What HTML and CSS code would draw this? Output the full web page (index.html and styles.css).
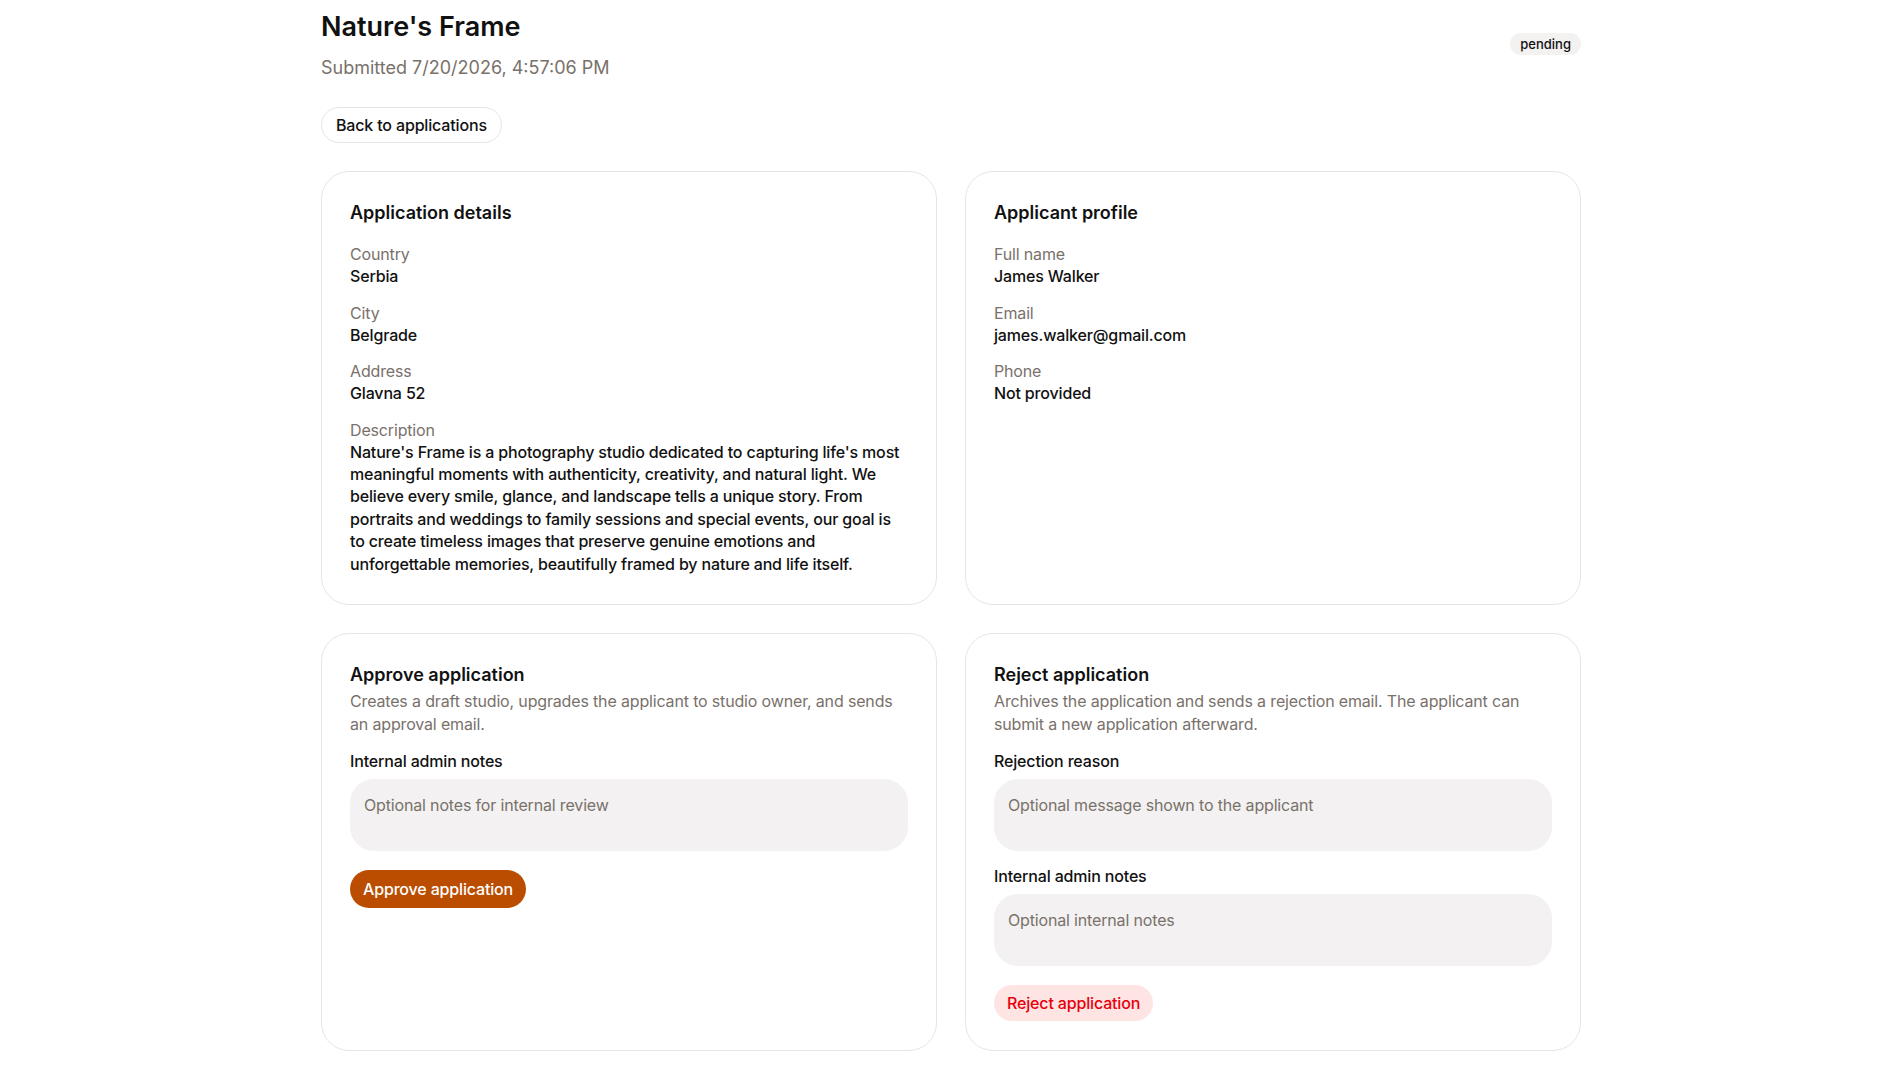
FILE: index.html
```html
<!DOCTYPE html>
<html lang="en">
<head>
  <meta charset="UTF-8">
  <title>Nature's Frame – Application</title>
  <link rel="stylesheet" href="styles.css">
</head>
<body>
  <main class="page">
    <header class="page-header">
      <div>
        <h1 class="page-title">Nature's Frame</h1>
        <p class="page-sub">Submitted 7/20/2026, 4:57:06 PM</p>
      </div>
      <span class="badge">pending</span>
    </header>

    <a class="back-btn" href="#">Back to applications</a>

    <div class="grid">
      <section class="card">
        <h2 class="card-title">Application details</h2>
        <dl class="fields">
          <div class="field">
            <dt>Country</dt>
            <dd>Serbia</dd>
          </div>
          <div class="field">
            <dt>City</dt>
            <dd>Belgrade</dd>
          </div>
          <div class="field">
            <dt>Address</dt>
            <dd>Glavna 52</dd>
          </div>
          <div class="field">
            <dt>Description</dt>
            <dd>Nature's Frame is a photography studio dedicated to capturing life's most meaningful moments with authenticity, creativity, and natural light. We believe every smile, glance, and landscape tells a unique story. From portraits and weddings to family sessions and special events, our goal is to create timeless images that preserve genuine emotions and unforgettable memories, beautifully framed by nature and life itself.</dd>
          </div>
        </dl>
      </section>

      <section class="card">
        <h2 class="card-title">Applicant profile</h2>
        <dl class="fields">
          <div class="field">
            <dt>Full name</dt>
            <dd>James Walker</dd>
          </div>
          <div class="field">
            <dt>Email</dt>
            <dd>james.walker@gmail.com</dd>
          </div>
          <div class="field">
            <dt>Phone</dt>
            <dd>Not provided</dd>
          </div>
        </dl>
      </section>

      <section class="card">
        <h2 class="card-title">Approve application</h2>
        <p class="card-desc">Creates a draft studio, upgrades the applicant to studio owner, and sends an approval email.</p>
        <label class="input-label" for="approveNotes">Internal admin notes</label>
        <textarea class="input" id="approveNotes" placeholder="Optional notes for internal review"></textarea>
        <div class="actions">
          <button class="btn btn-approve">Approve application</button>
        </div>
      </section>

      <section class="card">
        <h2 class="card-title">Reject application</h2>
        <p class="card-desc">Archives the application and sends a rejection email. The applicant can submit a new application afterward.</p>
        <label class="input-label" for="rejectReason">Rejection reason</label>
        <textarea class="input" id="rejectReason" placeholder="Optional message shown to the applicant"></textarea>
        <label class="input-label" for="rejectNotes">Internal admin notes</label>
        <textarea class="input" id="rejectNotes" placeholder="Optional internal notes"></textarea>
        <div class="actions">
          <button class="btn btn-reject">Reject application</button>
        </div>
      </section>
    </div>
  </main>
</body>
</html>
```

FILE: styles.css
```css
* {
  box-sizing: border-box;
  margin: 0;
  padding: 0;
}
body {
  font-family: Inter, "Noto Sans", sans-serif;
  font-size: 16px;
  letter-spacing: -0.01em;
  color: #111;
  background: #fff;
}
.page {
  max-width: 1262px;
  margin: 0 auto;
  padding: 11px 0 14px 2px;
}
.page-header {
  display: flex;
  justify-content: space-between;
  align-items: center;
}
.page-title {
  font-size: 27px;
  font-weight: 600;
  line-height: 1.2;
  letter-spacing: 0;
}
.page-sub {
  margin-top: 11px;
  font-size: 18px;
  line-height: 27px;
  letter-spacing: 0;
  color: #79716b;
}
.badge {
  margin-bottom: 5px;
  font-size: 13px;
  font-weight: 500;
  line-height: 16px;
  letter-spacing: 0;
  padding: 3px 10px;
  border-radius: 999px;
  background: #f3f2f1;
}
.back-btn {
  display: inline-block;
  margin-top: 26px;
  padding: 6px 14px;
  font-size: 16px;
  font-weight: 500;
  line-height: 22px;
  color: #111;
  text-decoration: none;
  border: 1px solid #e7e5e4;
  border-radius: 999px;
}
.grid {
  display: grid;
  grid-template-columns: 1fr 1fr;
  gap: 28px;
  margin-top: 28px;
}
.card {
  display: flex;
  flex-direction: column;
  border: 1px solid #e7e5e4;
  border-radius: 28px;
  padding: 27px 28px 29px;
}
.card-title {
  font-size: 18px;
  font-weight: 600;
  line-height: 27px;
  letter-spacing: 0;
}
.fields {
  margin-top: 17px;
  display: flex;
  flex-direction: column;
  gap: 14px;
}
.field dt {
  line-height: 22px;
  color: #79716b;
}
.field dd {
  font-weight: 500;
  line-height: 22.4px;
}
.card-desc {
  margin-top: 2px;
  line-height: 23px;
  color: #79716b;
}
.input-label {
  display: block;
  margin-top: 14px;
  font-weight: 500;
  line-height: 22px;
}
.input {
  display: block;
  width: 100%;
  height: 72px;
  margin-top: 7px;
  padding: 15px 14px;
  font-family: inherit;
  font-size: 16px;
  letter-spacing: -0.01em;
  line-height: 22.4px;
  color: #111;
  background: #f3f1f1;
  border: none;
  border-radius: 24px;
  resize: none;
}
.input::placeholder {
  color: #79716b;
}
.actions {
  margin-top: 19px;
}
.btn {
  font-family: inherit;
  font-size: 16px;
  font-weight: 500;
  letter-spacing: -0.01em;
  line-height: 22px;
  padding: 8px 13px;
  border: none;
  border-radius: 999px;
  cursor: pointer;
}
.btn-approve {
  background: #bb4d00;
  color: #fff;
}
.btn-reject {
  background: #ffe4e4;
  color: #e7000b;
  padding: 7px 13px;
}
```
